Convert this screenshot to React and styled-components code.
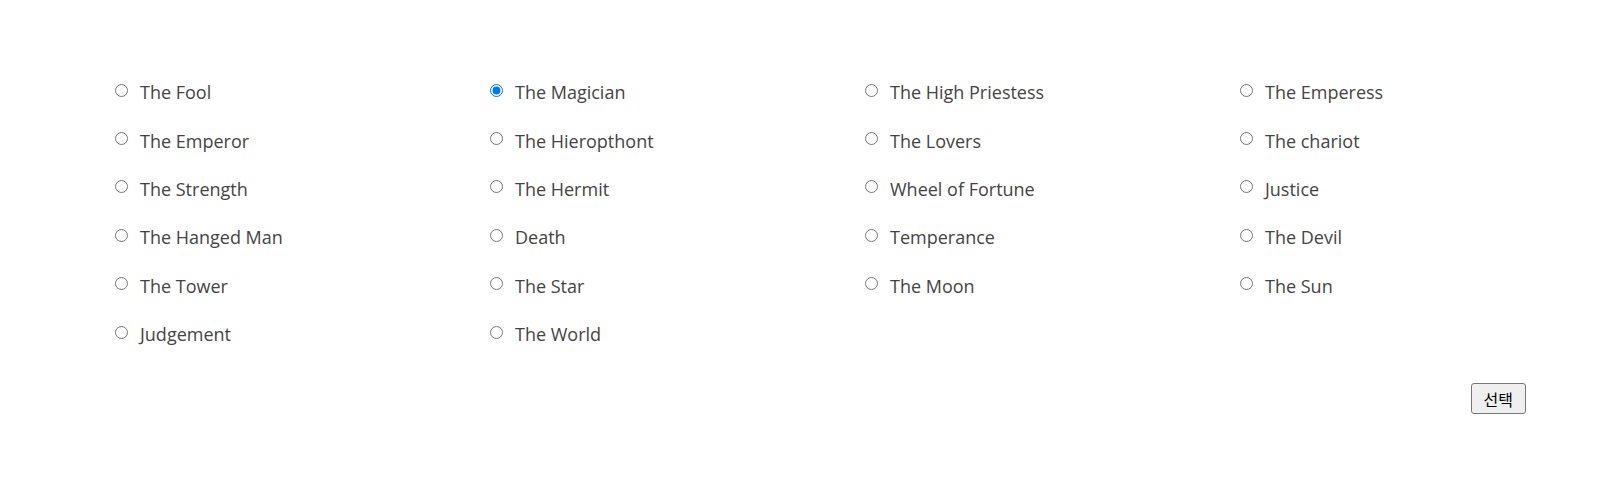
import React, { useState } from 'react'
import styled, { createGlobalStyle } from 'styled-components'

const GlobalStyle = createGlobalStyle`
    body{
        margin:0;
        background:#fff;
        font-family: "Open Sans", "Noto Sans CJK KR", sans-serif;
    }
`

const StyledPage = styled.div`
    padding: 68px 72px 0 110px;

    .cards{
        display:grid;
        grid-template-columns: repeat(4, 375px);
        grid-auto-rows: 48.4px;
    }

    .footer{
        display:flex;
        justify-content:flex-end;
        margin-top:25px;
    }
`

const Option = styled.label`
    display:flex;
    align-items:center;
    font-size:18px;
    color:#444;
    cursor:pointer;

    input{
        width:13px;
        height:13px;
        margin:0 12px 0 5px;
        position:relative;
        top:-2px;
    }
`

const SelectButton = styled.button`
    font-family: "Noto Sans CJK KR", sans-serif;
    font-size:16px;
    height:31px;
    padding:0 12px;
    border:1px solid #767676;
    border-radius:3px;
    background:#efefef;
    color:#000;
`

const cards = [
    'The Fool', 'The Magician', 'The High Priestess', 'The Emperess',
    'The Emperor', 'The Hieropthont', 'The Lovers', 'The chariot',
    'The Strength', 'The Hermit', 'Wheel of Fortune', 'Justice',
    'The Hanged Man', 'Death', 'Temperance', 'The Devil',
    'The Tower', 'The Star', 'The Moon', 'The Sun',
    'Judgement', 'The World',
]

function App () {
    const [picked, setPicked] = useState('The Magician')

    return (
        <StyledPage>
            <GlobalStyle />
            <div className='cards'>
                {cards.map(name => (
                    <Option key={name}>
                        <input
                            type='radio'
                            name='tarot'
                            checked={picked === name}
                            onChange={() => setPicked(name)}
                        />
                        {name}
                    </Option>
                ))}
            </div>
            <div className='footer'>
                <SelectButton>선택</SelectButton>
            </div>
        </StyledPage>
    )
}

export default App
